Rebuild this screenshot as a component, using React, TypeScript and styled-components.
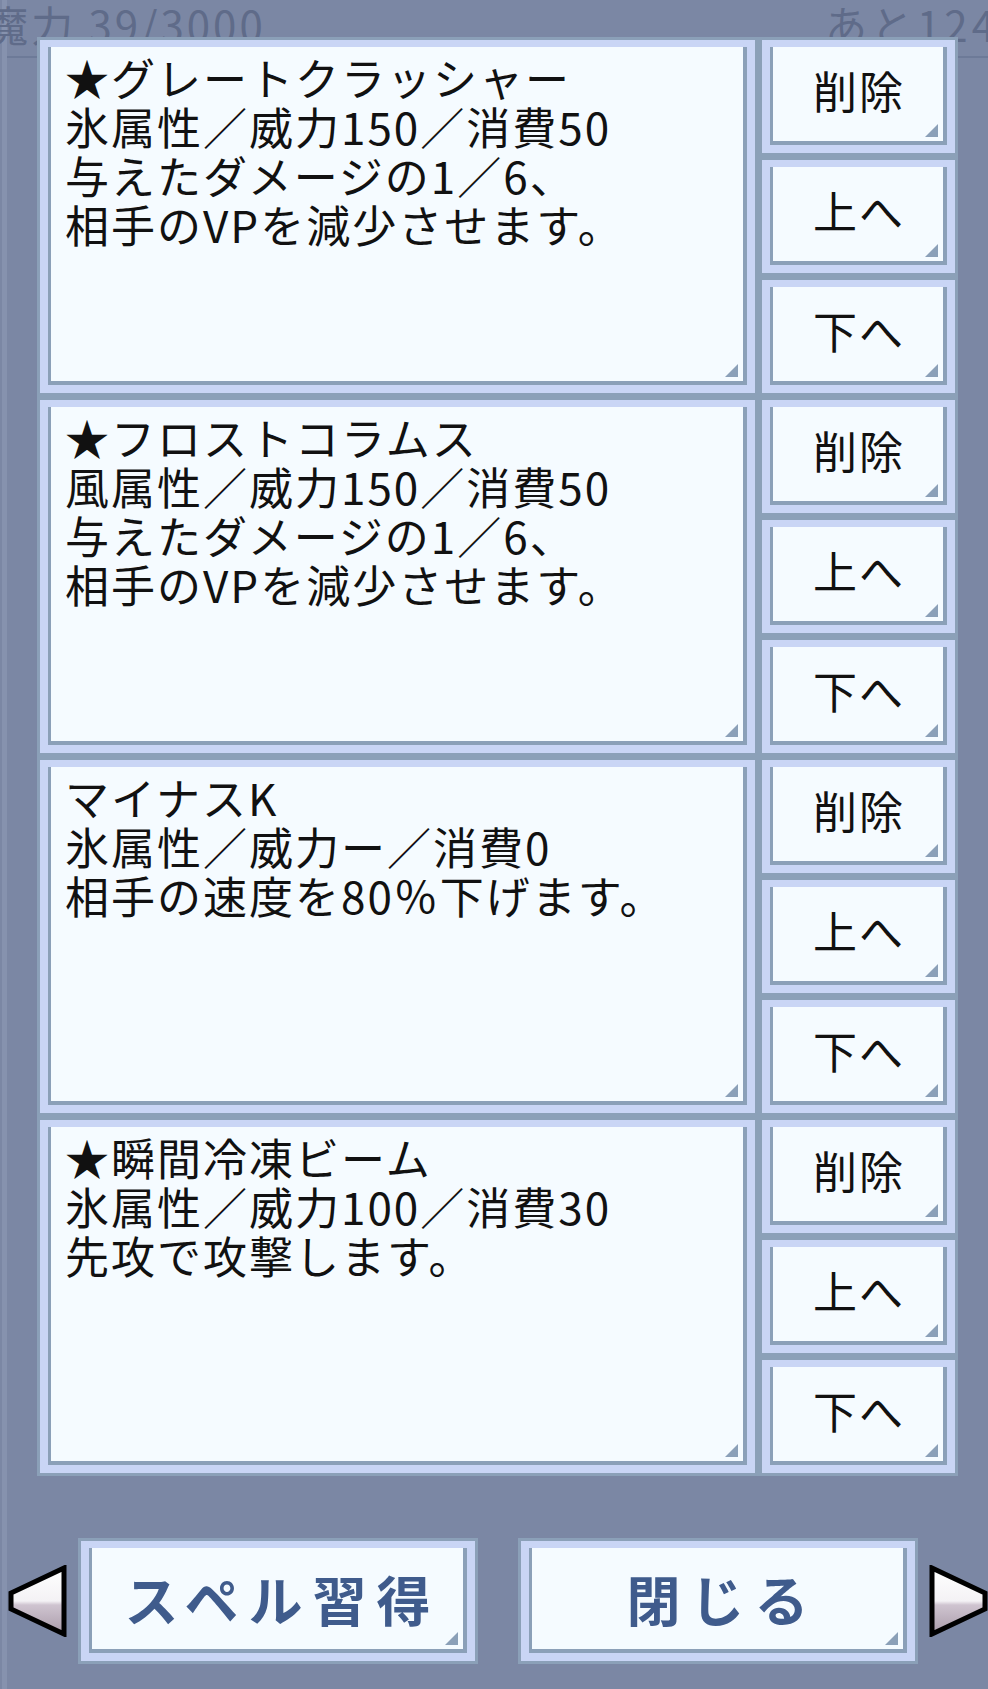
import React from "react";
import styled, { createGlobalStyle } from "styled-components";

const COLORS = {
  page: "#7b87a4",
  gray: "#8ba0b8",
  frame: "#c9d5f5",
  white: "#f5fbff",
  ink: "#111111",
  blue: "#3f5b8c",
  dim: "#5f6b89",
};

const GlobalStyle = createGlobalStyle`
  html, body {
    margin: 0;
    padding: 0;
    background: ${COLORS.page};
  }
  body {
    font-family: "Noto Sans CJK JP", "Noto Sans", sans-serif;
  }
`;

const Stage = styled.div`
  position: relative;
  width: 988px;
  height: 1689px;
  overflow: hidden;
  background: ${COLORS.page};
`;

const Backdrop = styled.div`
  box-sizing: border-box;
  height: 100%;
  margin-left: 2px;
  border-left: 5px solid #8692ae;
`;

const Header = styled.div`
  box-sizing: border-box;
  display: flex;
  align-items: flex-start;
  height: 58px;
  padding-top: 3px;
  border-bottom: 2px solid #6d7a98;
  font-size: 42px;
  line-height: 42px;
  letter-spacing: 3px;
  color: ${COLORS.dim};
  white-space: nowrap;
`;

const HeaderLeft = styled.span`
  margin-left: -21px;
`;

const HeaderRight = styled.span`
  margin-left: auto;
  margin-right: -57px;
  letter-spacing: 4px;
`;

const Modal = styled.div`
  position: absolute;
  inset: 0;
  display: flex;
  flex-direction: column;
`;

const List = styled.div`
  box-sizing: border-box;
  width: 921px;
  margin: 37px 0 0 37px;
  display: flex;
  flex-direction: column;
  gap: 1px;
  background: ${COLORS.gray};
`;

const Row = styled.div`
  display: grid;
  grid-template-columns: 721px 199px;
  gap: 1px;
  height: 359px;
`;

const ButtonColumn = styled.div`
  display: grid;
  grid-template-rows: repeat(3, 119px);
  gap: 1px;
`;

const Frame = styled.div<{ $w?: number; $h?: number }>`
  box-sizing: border-box;
  display: flex;
  border: 3px solid ${COLORS.gray};
  background: ${COLORS.frame};
  padding: 7px 8px 8px 8px;
  ${(p) => (p.$w ? `width: ${p.$w}px;` : "")}
  ${(p) => (p.$h ? `height: ${p.$h}px;` : "")}
`;

const Inner = styled.div`
  position: relative;
  flex: 1;
  box-sizing: border-box;
  background: ${COLORS.white};
  border-left: 3px solid ${COLORS.gray};
  border-right: 4px solid ${COLORS.gray};
  border-bottom: 4px solid ${COLORS.gray};

  &::after {
    content: "";
    position: absolute;
    right: 5px;
    bottom: 4px;
    width: 13px;
    height: 13px;
    background: ${COLORS.gray};
    clip-path: polygon(100% 0, 100% 100%, 0 100%);
  }
`;

const SpellText = styled(Inner)`
  padding: 6px 0 0 14px;
  font-size: 44px;
  line-height: 49px;
  letter-spacing: 2px;
  color: ${COLORS.ink};
  white-space: pre-line;
`;

const ButtonLabel = styled(Inner)`
  display: flex;
  align-items: center;
  justify-content: center;
  padding: 0 0 8px 2px;
  font-size: 44px;
  letter-spacing: 2px;
  color: ${COLORS.ink};
`;

const BottomRow = styled.div`
  display: flex;
  align-items: center;
  margin-top: 62px;
  padding-left: 8px;
`;

const BigLabel = styled(Inner)<{ $ls: number }>`
  display: flex;
  align-items: center;
  justify-content: center;
  padding-left: ${(p) => p.$ls}px;
  font-size: 54px;
  font-weight: 700;
  letter-spacing: ${(p) => p.$ls}px;
  color: ${COLORS.blue};
`;

const ArrowSvg = styled.svg<{ $flip?: boolean }>`
  display: block;
  flex: none;
  transform: ${(p) => (p.$flip ? "scaleX(-1)" : "none")};
`;

const Spacer = styled.div<{ $w: number }>`
  flex: none;
  width: ${(p) => p.$w}px;
`;

const Arrow = ({ flip, id }: { flip?: boolean; id: string }) => (
  <ArrowSvg $flip={flip} width="60" height="72" viewBox="0 0 60 72">
    <defs>
      <linearGradient id={id} x1="0" y1="0" x2="0" y2="1">
        <stop offset="0" stopColor="#ffffff" />
        <stop offset="0.5" stopColor="#f4f2f5" />
        <stop offset="0.56" stopColor="#cfc4d0" />
        <stop offset="1" stopColor="#a99ba9" />
      </linearGradient>
    </defs>
    <polygon
      points="56,3 56,69 3,44 3,28"
      fill={`url(#${id})`}
      stroke="#000"
      strokeWidth="5"
      strokeLinejoin="miter"
    />
  </ArrowSvg>
);

type Spell = { text: string };

const spells: Spell[] = [
  {
    text: "★グレートクラッシャー\n氷属性／威力150／消費50\n与えたダメージの1／6、\n相手のVPを減少させます。",
  },
  {
    text: "★フロストコラムス\n風属性／威力150／消費50\n与えたダメージの1／6、\n相手のVPを減少させます。",
  },
  {
    text: "マイナスK\n氷属性／威力ー／消費0\n相手の速度を80％下げます。",
  },
  {
    text: "★瞬間冷凍ビーム\n氷属性／威力100／消費30\n先攻で攻撃します。",
  },
];

const actions = ["削除", "上へ", "下へ"];

export default function App() {
  return (
    <Stage>
      <GlobalStyle />
      <Backdrop>
        <Header>
          <HeaderLeft>魔力 39/3000</HeaderLeft>
          <HeaderRight>あと124枠</HeaderRight>
        </Header>
      </Backdrop>
      <Modal>
        <List>
          {spells.map((s, i) => (
            <Row key={i}>
              <Frame>
                <SpellText>{s.text}</SpellText>
              </Frame>
              <ButtonColumn>
                {actions.map((a) => (
                  <Frame key={a}>
                    <ButtonLabel>{a}</ButtonLabel>
                  </Frame>
                ))}
              </ButtonColumn>
            </Row>
          ))}
        </List>
        <BottomRow>
          <Arrow id="arrowL" />
          <Spacer $w={10} />
          <Frame $w={400} $h={126}>
            <BigLabel $ls={10}>スペル習得</BigLabel>
          </Frame>
          <Spacer $w={40} />
          <Frame $w={400} $h={126}>
            <BigLabel $ls={10}>閉じる</BigLabel>
          </Frame>
          <Spacer $w={10} />
          <Arrow id="arrowR" flip />
        </BottomRow>
      </Modal>
    </Stage>
  );
}
